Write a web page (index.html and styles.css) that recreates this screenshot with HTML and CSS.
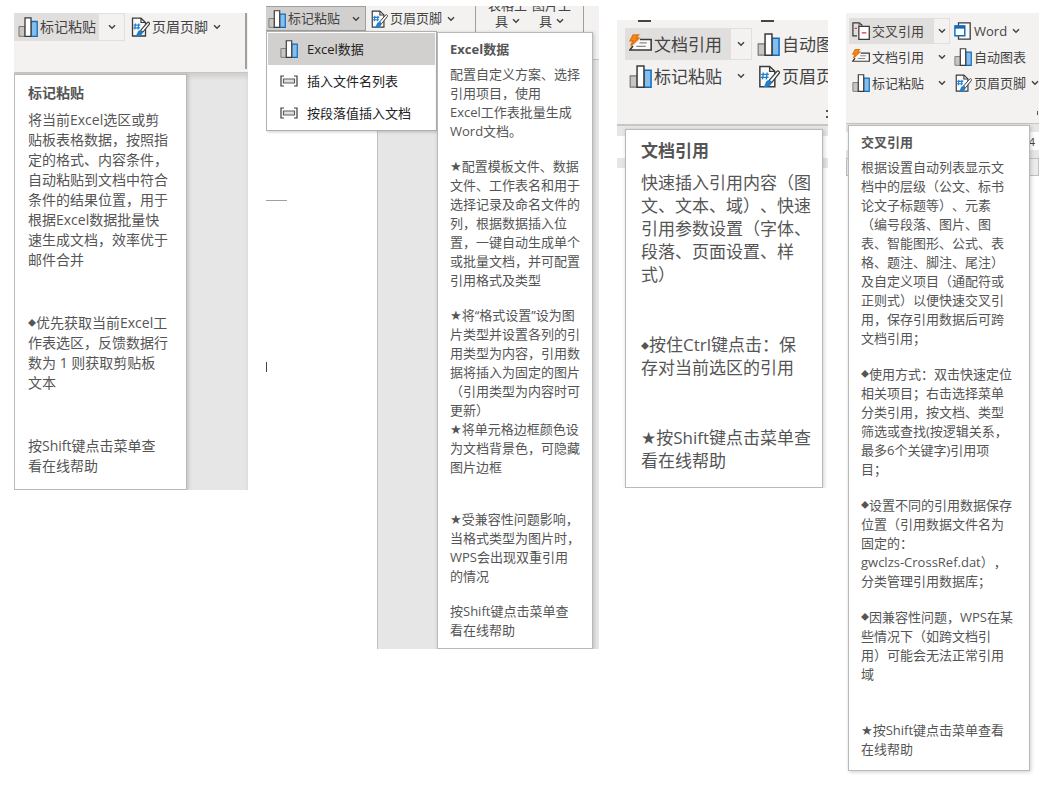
FILE: index.html
```html
<!DOCTYPE html>
<html lang="zh-CN">
<head>
<meta charset="utf-8">
<title>功能提示</title>
<link rel="stylesheet" href="styles.css">
</head>
<body>
<svg class="defs" aria-hidden="true">
  <symbol id="chart" viewBox="0 0 20 20">
    <path d="M1 9.5H7V19.3H1Z" fill="#c8c6c4" stroke="#797775"/>
    <path d="M13 4.5H19.2V19.3H13Z" fill="#83beec" stroke="#0f6cbd" stroke-width="1.3"/>
    <path d="M7 .8H13V19.3H7Z" fill="#fff" stroke="#3b3a39" stroke-width="1.3"/>
  </symbol>
  <symbol id="page" viewBox="0 0 20 20">
    <path d="M2.5 19V1.2H11L15.5 5.5V19Z" fill="#fafafa" stroke="#3b3a39" stroke-width="1.3"/>
    <path d="M11 1.2V5.5H15.5" fill="none" stroke="#3b3a39" stroke-width="1.2"/>
    <path d="M5.5 6.5L4.8 12.5M8.8 6.5L8.1 12.5M3.6 8.2H10.3M3.3 10.8H10" fill="none" stroke="#1e7fd0" stroke-width="1.2"/>
    <path d="M18.6 5.2Q20 6 19.2 7.4L12.8 15.3L10.6 13.4L17.2 5.8Q17.9 5 18.6 5.2Z" fill="#fff" stroke="#3b3a39" stroke-width="1.1"/>
    <path d="M10 13.2Q13.4 14.2 12.6 16.6Q11 19.6 4.5 19.4Q7 18 7.3 16Q7.8 13.4 10 13.2Z" fill="#1e7fd0"/>
  </symbol>
  <symbol id="quick" viewBox="0 0 22 20">
    <path d="M10.5 5.2H21.2V15.2H.8L3.8 11.4" fill="#fafafa" stroke="#3b3a39" stroke-width="1.5"/>
    <path d="M10 8.5H17M7 11.8H16" fill="none" stroke="#8a8886" stroke-width="1.2"/>
    <path d="M4 .8H9L6.8 4H9.4L1.8 11.2L3.8 6.4H1Z" fill="#f08a24" stroke="#e8730c" stroke-width="1.4"/>
  </symbol>
  <symbol id="cross" viewBox="0 0 20 20">
    <path d="M5.5 15.5H1V1H8L11.5 4" fill="none" stroke="#3b3a39" stroke-width="1.4"/>
    <path d="M7.8 1V4.6" stroke="#605e5c" stroke-width="1.1"/>
    <path d="M7.6 4.8H19.2V19.2H7.6Z" fill="#fff" stroke="#3b3a39" stroke-width="1.4"/>
    <path d="M3 7H5.5M10.8 12H16" stroke="#f02b35" stroke-width="1.5"/>
  </symbol>
  <symbol id="window" viewBox="0 0 20 20">
    <path d="M5 5V1H18V19H5V15" fill="#fafafa" stroke="#3b3a39" stroke-width="1.4"/>
    <path d="M1 4.5H12V15.2H1Z" fill="#fff" stroke="#0f6cbd" stroke-width="1.6"/>
    <path d="M1 4H12V7.4H1Z" fill="#0f6cbd"/>
  </symbol>
  <symbol id="field" viewBox="0 0 18 12">
    <path d="M4 1H1V11H4M14 1H17V11H14" fill="none" stroke="#3b3a39" stroke-width="1.2"/>
    <path d="M3.5 4H14.5V8H3.5Z" fill="#e1dfdd" stroke="#605e5c" stroke-width="1.2"/>
  </symbol>
  <symbol id="down" viewBox="0 0 8 6">
    <path d="M1 1.2L4 4.2L7 1.2" fill="none" stroke="#444" stroke-width="1.5"/>
  </symbol>
</svg>

<main class="board">

  <section class="panel panel-paste">
    <div class="backdrop">
      <div class="ribbon">
        <div class="row">
          <div class="split active">
            <button class="cmd"><svg class="icon"><use href="#chart"/></svg>标记粘贴</button>
            <button class="drop" aria-label="更多标记粘贴"><svg class="caret"><use href="#down"/></svg></button>
          </div>
          <button class="cmd next"><svg class="icon"><use href="#page"/></svg>页眉页脚<svg class="caret"><use href="#down"/></svg></button>
          <span class="rule"></span>
        </div>
      </div>
      <div class="canvas"></div>
    </div>
    <aside class="tip">
      <h2>标记粘贴</h2>
      <p>将当前Excel选区或剪<br>贴板表格数据，按照指<br>定的格式、内容条件，<br>自动粘贴到文档中符合<br>条件的结果位置，用于<br>根据Excel数据批量快<br>速生成文档，效率优于<br>邮件合并</p>
      <p class="far"><i class="dia">◆</i>优先获取当前Excel工<br>作表选区，反馈数据行<br>数为 1 则获取剪贴板<br>文本</p>
      <p class="far">按Shift键点击菜单查<br>看在线帮助</p>
    </aside>
  </section>

  <section class="panel panel-excel">
    <div class="backdrop">
      <div class="ribbon">
        <div class="row">
          <button class="cmd pressed"><svg class="icon"><use href="#chart"/></svg>标记粘贴<svg class="caret"><use href="#down"/></svg></button>
          <button class="cmd next"><svg class="icon"><use href="#page"/></svg>页眉页脚<svg class="caret"><use href="#down"/></svg></button>
          <div class="tools">
            <button class="tool">表格工<br>具<svg class="caret"><use href="#down"/></svg></button>
            <button class="tool">图片工<br>具<svg class="caret"><use href="#down"/></svg></button>
          </div>
        </div>
      </div>
      <div class="document">
        <div class="sheet"><span class="dash"></span><span class="cursor"></span></div>
      </div>
    </div>
    <div class="overlay">
      <div class="menu" role="menu">
        <button class="item current" role="menuitem"><svg class="icon"><use href="#chart"/></svg>Excel数据</button>
        <button class="item" role="menuitem"><svg class="icon"><use href="#field"/></svg>插入文件名列表</button>
        <button class="item" role="menuitem"><svg class="icon"><use href="#field"/></svg>按段落值插入文档</button>
      </div>
      <aside class="tip">
        <h2>Excel数据</h2>
        <p>配置自定义方案、选择<br>引用项目，使用<br>Excel工作表批量生成<br>Word文档。</p>
        <p><i class="star">★</i>配置模板文件、数据<br>文件、工作表名和用于<br>选择记录及命名文件的<br>列，根据数据插入位<br>置，一键自动生成单个<br>或批量文档，并可配置<br>引用格式及类型</p>
        <p><i class="star">★</i>将“格式设置”设为图<br>片类型并设置各列的引<br>用类型为内容，引用数<br>据将插入为固定的图片<br>（引用类型为内容时可<br>更新）<br><i class="star">★</i>将单元格边框颜色设<br>为文档背景色，可隐藏<br>图片边框</p>
        <p class="far"><i class="star">★</i>受兼容性问题影响，<br>当格式类型为图片时，<br>WPS会出现双重引用<br>的情况</p>
        <p>按Shift键点击菜单查<br>看在线帮助</p>
      </aside>
    </div>
  </section>

  <section class="panel panel-doc">
    <div class="backdrop">
      <div class="ribbon">
        <div class="stubs"><span></span><span></span></div>
        <div class="row">
          <div class="split active">
            <button class="cmd"><svg class="icon"><use href="#quick"/></svg>文档引用</button>
            <button class="drop" aria-label="更多文档引用"><svg class="caret"><use href="#down"/></svg></button>
          </div>
          <button class="cmd next"><svg class="icon"><use href="#chart"/></svg>自动图表</button>
        </div>
        <div class="row">
          <div class="split">
            <button class="cmd"><svg class="icon"><use href="#chart"/></svg>标记粘贴</button>
            <button class="drop" aria-label="更多标记粘贴"><svg class="caret"><use href="#down"/></svg></button>
          </div>
          <button class="cmd next"><svg class="icon"><use href="#page"/></svg>页眉页脚</button>
        </div>
        <div class="edge"></div>
      </div>
      <div class="band gray"></div>
      <div class="band white"></div>
      <div class="band gray"></div>
    </div>
    <aside class="tip">
      <h2>文档引用</h2>
      <p>快速插入引用内容（图<br>文、文本、域）、快速<br>引用参数设置（字体、<br>段落、页面设置、样<br>式）</p>
      <p class="far"><i class="dia">◆</i>按住Ctrl键点击：保<br>存对当前选区的引用</p>
      <p class="far"><i class="star">★</i>按Shift键点击菜单查<br>看在线帮助</p>
    </aside>
  </section>

  <section class="panel panel-cross">
    <div class="backdrop">
      <div class="ribbon">
        <div class="row">
          <div class="split active">
            <button class="cmd"><svg class="icon"><use href="#cross"/></svg>交叉引用</button>
            <button class="drop" aria-label="更多交叉引用"><svg class="caret"><use href="#down"/></svg></button>
          </div>
          <button class="cmd next"><svg class="icon"><use href="#window"/></svg>Word<svg class="caret"><use href="#down"/></svg></button>
        </div>
        <div class="row">
          <div class="split">
            <button class="cmd"><svg class="icon"><use href="#quick"/></svg>文档引用</button>
            <button class="drop" aria-label="更多文档引用"><svg class="caret"><use href="#down"/></svg></button>
          </div>
          <button class="cmd next"><svg class="icon"><use href="#chart"/></svg>自动图表</button>
        </div>
        <div class="row">
          <div class="split">
            <button class="cmd"><svg class="icon"><use href="#chart"/></svg>标记粘贴</button>
            <button class="drop" aria-label="更多标记粘贴"><svg class="caret"><use href="#down"/></svg></button>
          </div>
          <button class="cmd next"><svg class="icon"><use href="#page"/></svg>页眉页脚<svg class="caret"><use href="#down"/></svg></button>
        </div>
        <div class="edge"></div>
      </div>
      <div class="band gray"></div>
      <div class="band white">4</div>
      <div class="band gray"></div>
      <div class="band box"></div>
    </div>
    <aside class="tip">
      <h2>交叉引用</h2>
      <p>根据设置自动列表显示文<br>档中的层级（公文、标书<br>论文子标题等）、元素<br>（编号段落、图片、图<br>表、智能图形、公式、表<br>格、题注、脚注、尾注）<br>及自定义项目（通配符或<br>正则式）以便快速交叉引<br>用，保存引用数据后可跨<br>文档引用；</p>
      <p><i class="dia">◆</i>使用方式：双击快速定位<br>相关项目；右击选择菜单<br>分类引用，按文档、类型<br>筛选或查找(按逻辑关系，<br>最多6个关键字)引用项<br>目；</p>
      <p><i class="dia">◆</i>设置不同的引用数据保存<br>位置（引用数据文件名为<br>固定的：<br>gwclzs-CrossRef.dat），<br>分类管理引用数据库；</p>
      <p><i class="dia">◆</i>因兼容性问题，WPS在某<br>些情况下（如跨文档引<br>用）可能会无法正常引用<br>域</p>
      <p class="far"><i class="star">★</i>按Shift键点击菜单查看<br>在线帮助</p>
    </aside>
  </section>

</main>
</body>
</html>
```
FILE: styles.css
```css
* { box-sizing: border-box; }

body {
  margin: 0;
  background: #fff;
  color: #444;
  font-family: "Open Sans", "Noto Sans CJK SC", sans-serif;
  text-spacing-trim: space-all;
  overflow-x: hidden;
}

.defs { display: none; }

.board {
  display: grid;
  grid-template-columns: minmax(0, 234fr) minmax(0, 333fr) minmax(0, 211fr) minmax(0, 193fr);
  column-gap: 18px;
  align-items: start;
  padding-left: 14px;
}

/* Each panel stacks its tooltip over the application behind it */
.panel {
  display: grid;
  grid-template-columns: minmax(0, 1fr);
  overflow: hidden;
  white-space: nowrap;
  font-size: var(--size);
  line-height: var(--line);
}
.backdrop, .tip, .overlay { grid-area: 1 / 1; }
.overlay .tip { grid-area: auto; }
.backdrop { display: flex; flex-direction: column; }

.ribbon {
  background: #f3f2f1;
  border-bottom: 1px solid #c8c6c4;
  overflow: hidden;
}
.row { display: flex; align-items: center; height: var(--row); }

button {
  display: flex;
  align-items: center;
  flex: none;
  height: 100%;
  margin: 0;
  padding: 0;
  border: 0;
  background: none;
  color: #444;
  font: inherit;
  white-space: nowrap;
}
.icon { flex: none; width: var(--icon); height: var(--icon); }
.caret { flex: none; width: 8px; height: 6px; }
.cmd { gap: 2px; }
.cmd .caret { margin-left: 3px; }

.split { display: flex; flex: none; height: 100%; }
.drop { justify-content: center; border: 1px solid transparent; }
.split.active .cmd { background: #e1dfdd; }
.split.active .drop { border-color: #e1dfdd; }
.edge { width: 2px; margin-left: auto; border: solid #555; }

.tip {
  background: #fff;
  border: 1px solid #b9b9b9;
  box-shadow: 1px 1px 4px #00000033;
  color: #555;
}
.tip h2 { margin: 0; font-size: inherit; line-height: inherit; font-weight: 700; }
.tip p { margin: var(--near) 0 0; }
.tip p.far { margin-top: var(--far); }
.tip h2 + p { margin-top: var(--lead); }
.dia { font-style: normal; font-size: 8px; vertical-align: 2px; line-height: 1; }
.star { font-style: normal; font-family: "DejaVu Sans", sans-serif; line-height: 1; }

.panel-paste {
  --size: 14px; --line: 20px; --row: 28px; --icon: 20px;
  --lead: 7px; --far: 43px;
  margin-top: 13px;
}
.panel-paste .ribbon { height: 60px; }
.panel-paste .split .cmd { width: 84px; padding-left: 4px; }
.panel-paste .drop { width: 27px; }
.panel-paste .next { margin-left: 5px; }
.panel-paste .rule { align-self: flex-start; width: 2px; height: 56px; margin: 0 1px 0 auto; background: #a19f9d; }
.panel-paste .canvas { flex: 1; background: #e6e6e6; box-shadow: inset 0 4px 4px #0000001a; }
.panel-paste .tip { width: 173px; margin-top: 61px; padding: 8px 0 13px 13px; }

.panel-excel {
  --size: 13px; --line: 19px; --row: 25px; --icon: 18px;
  --near: 16px; --far: 33px; --lead: 6px;
  margin-top: 6px;
}
.panel-excel .ribbon { height: 54px; }
.panel-excel .pressed { width: 100px; padding: 0 5px 0 2px; border: 1px solid #a19f9d; border-left: 0; background: #d2d0ce; }
.panel-excel .pressed .caret { margin-left: auto; }
.panel-excel .next { margin-left: 4px; }
.tools {
  display: flex;
  align-items: flex-end;
  justify-content: center;
  gap: 5px;
  align-self: flex-start;
  flex: none;
  width: 109px;
  height: 54px;
  margin-left: auto;
  margin-right: 15px;
  padding-bottom: 31px;
  border: solid #a19f9d;
  border-width: 0 1px;
}
.tool { display: block; height: auto; line-height: 16px; text-align: center; }
.tool .caret { margin: 0 0 2px 4px; }
.document { display: flex; flex: 1; background: #e6e6e6; }
.sheet {
  display: flex;
  flex-direction: column;
  width: 112px;
  padding-top: 140px;
  border-right: 1px solid #c0c0c0;
  background: #fff;
}
.dash { width: 21px; height: 1px; background: #a0a0a0; }
.cursor { width: 1px; height: 10px; margin-top: 161px; background: #444; }
.overlay { display: flex; align-items: flex-start; margin: 25px 6px 0 0; }
.menu { flex: none; width: 171px; padding: 1px; border: 1px solid #b0b0b0; background: #fff; box-shadow: 1px 1px 3px #00000033; }
.item { width: 100%; height: 32px; gap: 9px; padding-left: 12px; color: #222; }
.item.current { background: #d2d0ce; }
.panel-excel .tip { flex: 1; position: relative; margin-top: 1px; padding: 7px 0 8px 12px; }

.panel-doc {
  --size: 17px; --line: 23px; --row: 32px; --icon: 23px;
  --lead: 9px; --far: 47px;
  margin-top: 20px;
}
.panel-doc .ribbon { height: 106px; padding-left: 8px; border-bottom-width: 2px; }
.stubs { display: flex; gap: 110px; height: 8px; padding-left: 13px; }
.stubs span { width: 13px; height: 2px; background: #444; }
.panel-doc .split .cmd { width: 105px; padding-left: 4px; }
.panel-doc .drop { width: 22px; }
.panel-doc .next { margin-left: 5px; }
.panel-doc .edge { height: 8px; margin-top: 18px; border-width: 2px 0; }
.panel-doc .tip { margin: 109px 5px 0 8px; padding: 9px 0 15px 15px; }
.band { flex: none; }
.gray { background: #e6e6e6; }
.panel-doc .gray { height: 10px; }
.panel-doc .white { height: 22px; }

.panel-cross {
  --size: 13px; --line: 19px; --row: 26px; --icon: 18px;
  --near: 17px; --far: 37px; --lead: 6px;
  margin-top: 13px;
  padding-bottom: 4px;
}
.panel-cross .ribbon { height: 111px; padding: 5px 0 0 3px; }
.panel-cross .split .cmd { width: 84px; padding-left: 3px; }
.panel-cross .drop { width: 17px; }
.panel-cross .next { margin-left: 4px; }
.panel-cross .edge { height: 4px; margin-top: 15px; border-width: 0 0 0 1px; }
.panel-cross .gray { height: 8px; }
.panel-cross .white { height: 18px; padding-right: 4px; text-align: right; font-size: 11px; }
.panel-cross .box { height: 18px; border: 1px solid #c0c0c0; background: #ececec; }
.panel-cross .tip { margin: 112px 9px 0 2px; padding: 7px 0 11px 12px; }
```
